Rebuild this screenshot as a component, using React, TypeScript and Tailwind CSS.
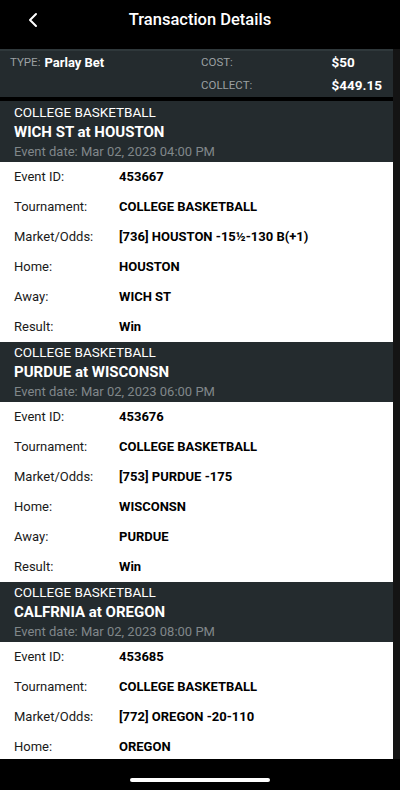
import { ChevronLeft } from 'lucide-react';

const EVENTS = [
  {
    league: 'COLLEGE BASKETBALL',
    title: 'WICH ST at HOUSTON',
    date: 'Event date: Mar 02, 2023 04:00 PM',
    rows: [
      ['Event ID:', '453667'],
      ['Tournament:', 'COLLEGE BASKETBALL'],
      ['Market/Odds:', '[736] HOUSTON -15½-130 B(+1)'],
      ['Home:', 'HOUSTON'],
      ['Away:', 'WICH ST'],
      ['Result:', 'Win'],
    ],
  },
  {
    league: 'COLLEGE BASKETBALL',
    title: 'PURDUE at WISCONSN',
    date: 'Event date: Mar 02, 2023 06:00 PM',
    rows: [
      ['Event ID:', '453676'],
      ['Tournament:', 'COLLEGE BASKETBALL'],
      ['Market/Odds:', '[753] PURDUE -175'],
      ['Home:', 'WISCONSN'],
      ['Away:', 'PURDUE'],
      ['Result:', 'Win'],
    ],
  },
  {
    league: 'COLLEGE BASKETBALL',
    title: 'CALFRNIA at OREGON',
    date: 'Event date: Mar 02, 2023 08:00 PM',
    // only the rows visible above the gesture bar
    rows: [
      ['Event ID:', '453685'],
      ['Tournament:', 'COLLEGE BASKETBALL'],
      ['Market/Odds:', '[772] OREGON -20-110'],
      ['Home:', 'OREGON'],
    ],
  },
];

export default function App() {
  return (
    <div className="relative w-[400px] h-[790px] overflow-hidden bg-black font-['Roboto',sans-serif] antialiased">
      {/* top bar */}
      <header className="h-[49px] flex items-center justify-center relative text-white">
        <ChevronLeft size={24} strokeWidth={2} className="absolute left-[21px] top-[8px]" />
        <h1 className="text-[16.5px] font-medium -mt-[8px]">Transaction Details</h1>
      </header>

      <div className="flex h-[710px]">
        <div className="w-[393px] h-full overflow-hidden">
          {/* summary */}
          <div className="h-[48px] bg-[#242b2e] border-t-2 border-[#2f383b] pl-[10px] pr-[11px] flex">
            <div className="w-[191px] h-[23px] flex items-center gap-[4px]">
              <span className="text-[11.5px] text-[#9ba0a2]">TYPE:</span>
              <span className="text-[13px] font-bold text-white">Parlay Bet</span>
            </div>
            <div className="flex-1 grid grid-cols-[1fr_auto] auto-rows-[23px] items-center text-[11.5px]">
              <span className="text-[#9ba0a2]">COST:</span>
              <span className="text-white font-bold text-[13.5px]">$50</span>
              <span className="text-[#9ba0a2]">COLLECT:</span>
              <span className="text-white font-bold text-[13.5px]">$449.15</span>
            </div>
          </div>
          <div className="h-[4px]" />

          {EVENTS.map((ev, i) => (
            <section key={i}>
              <div className={`bg-[#242b2e] px-[14px] ${i === 0 ? 'h-[61px] pt-px' : 'h-[60px]'}`}>
                <p className="h-[20px] leading-[20px] text-[13.5px] text-white">{ev.league}</p>
                <p className="h-[20px] leading-[20px] text-[15px] font-bold text-white">{ev.title}</p>
                <p className="h-[20px] leading-[20px] text-[13px] text-[#80878a]">{ev.date}</p>
              </div>
              <div className="bg-white">
                {ev.rows.map(([label, value]) => (
                  <div key={label} className="h-[30px] flex items-center px-[14px] text-[13px] text-[#1a1a1a]">
                    <span className="w-[105px]">{label}</span>
                    <span className="font-bold text-black">{value}</span>
                  </div>
                ))}
              </div>
            </section>
          ))}
        </div>
        <div className="flex-1 bg-[#141414]" />
      </div>

      {/* gesture bar */}
      <div className="absolute left-0 right-0 top-[759px] h-[31px] bg-black flex justify-center">
        <div className="mt-[19px] w-[140px] h-[4px] rounded-full bg-white" />
      </div>
    </div>
  );
}
